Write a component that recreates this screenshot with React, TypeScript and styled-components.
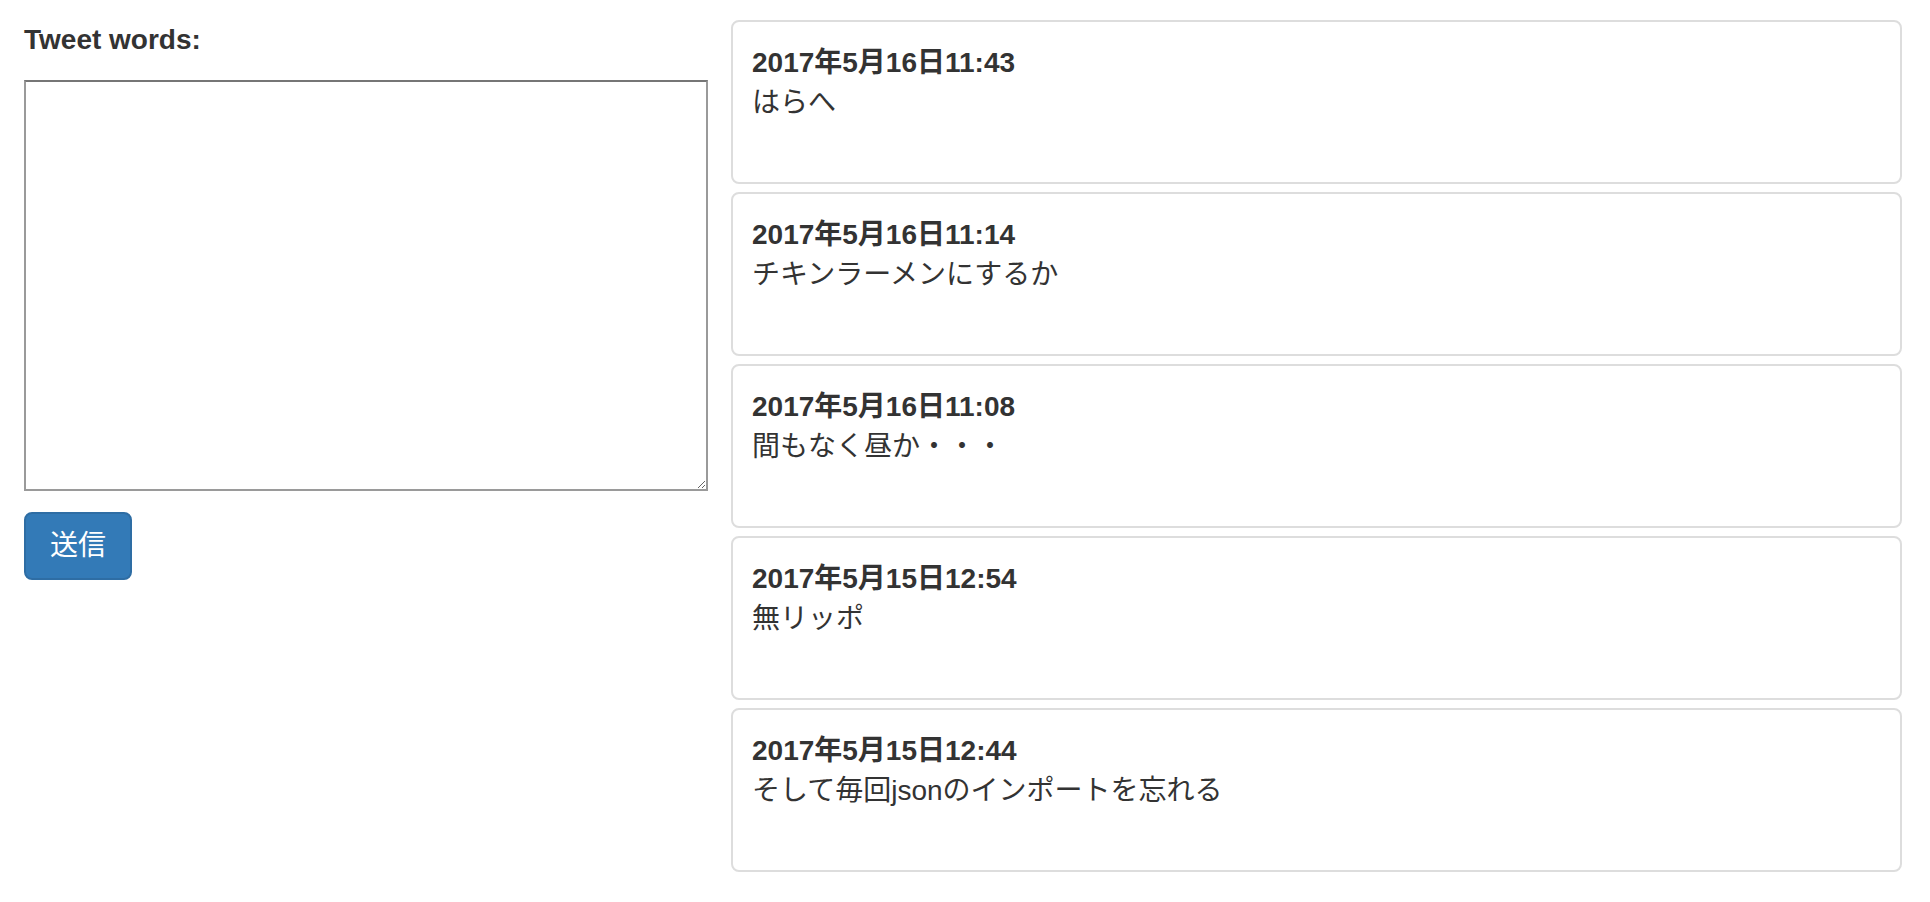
import React from "react";
import styled, { createGlobalStyle } from "styled-components";

const GlobalStyle = createGlobalStyle`
  html, body {
    margin: 0;
    padding: 0;
    background: #ffffff;
  }
  body {
    font-family: "Liberation Sans", "Noto Sans CJK JP", sans-serif;
    font-size: 28px;
    line-height: 40px;
    color: #333333;
  }
  * { box-sizing: border-box; }
`;

const Page = styled.div`
  display: grid;
  grid-template-columns: 684px 1fr;
  column-gap: 23px;
  padding: 20px 28px 20px 24px;
  align-items: start;
`;

const FormColumn = styled.form`
  display: flex;
  flex-direction: column;
  align-items: flex-start;
`;

const Label = styled.label`
  font-weight: 700;
  font-size: 28px;
  line-height: 40px;
  margin-bottom: 20px;
`;

const TextArea = styled.textarea`
  width: 684px;
  height: 411px;
  border: 2px solid #9a9a9a;
  border-top-color: #767676;
  border-radius: 0;
  padding: 4px;
  font-family: "Liberation Sans", "Noto Sans CJK JP", sans-serif;
  font-size: 28px;
  line-height: 40px;
  color: #333333;
  resize: both;
  margin: 0 0 21px 0;
  outline: none;
`;

const SubmitButton = styled.button`
  height: 68px;
  padding: 12px 24px;
  border: 2px solid #2e6da4;
  border-radius: 8px;
  background: #337ab7;
  color: #ffffff;
  font-family: "Liberation Sans", "Noto Sans CJK JP", sans-serif;
  font-size: 28px;
  line-height: 40px;
  cursor: pointer;
`;

const TweetList = styled.div`
  display: flex;
  flex-direction: column;
  gap: 8px;
`;

const TweetCard = styled.div`
  border: 2px solid #dddddd;
  border-radius: 8px;
  padding: 21px 18px 59px 19px;
  background: #ffffff;
`;

const TweetDate = styled.div`
  font-weight: 700;
  font-size: 28px;
  line-height: 40px;
`;

const TweetBody = styled.div`
  font-size: 28px;
  line-height: 40px;
`;

const tweets = [
  { date: "2017年5月16日11:43", text: "はらへ" },
  { date: "2017年5月16日11:14", text: "チキンラーメンにするか" },
  { date: "2017年5月16日11:08", text: "間もなく昼か・・・" },
  { date: "2017年5月15日12:54", text: "無リッポ" },
  { date: "2017年5月15日12:44", text: "そして毎回jsonのインポートを忘れる" },
];

export default function App() {
  return (
    <>
      <GlobalStyle />
      <Page>
        <FormColumn onSubmit={(e) => e.preventDefault()}>
          <Label htmlFor="tweet">Tweet words:</Label>
          <TextArea id="tweet" />
          <SubmitButton type="submit">送信</SubmitButton>
        </FormColumn>
        <TweetList>
          {tweets.map((t) => (
            <TweetCard key={t.date}>
              <TweetDate>{t.date}</TweetDate>
              <TweetBody>{t.text}</TweetBody>
            </TweetCard>
          ))}
        </TweetList>
      </Page>
    </>
  );
}
